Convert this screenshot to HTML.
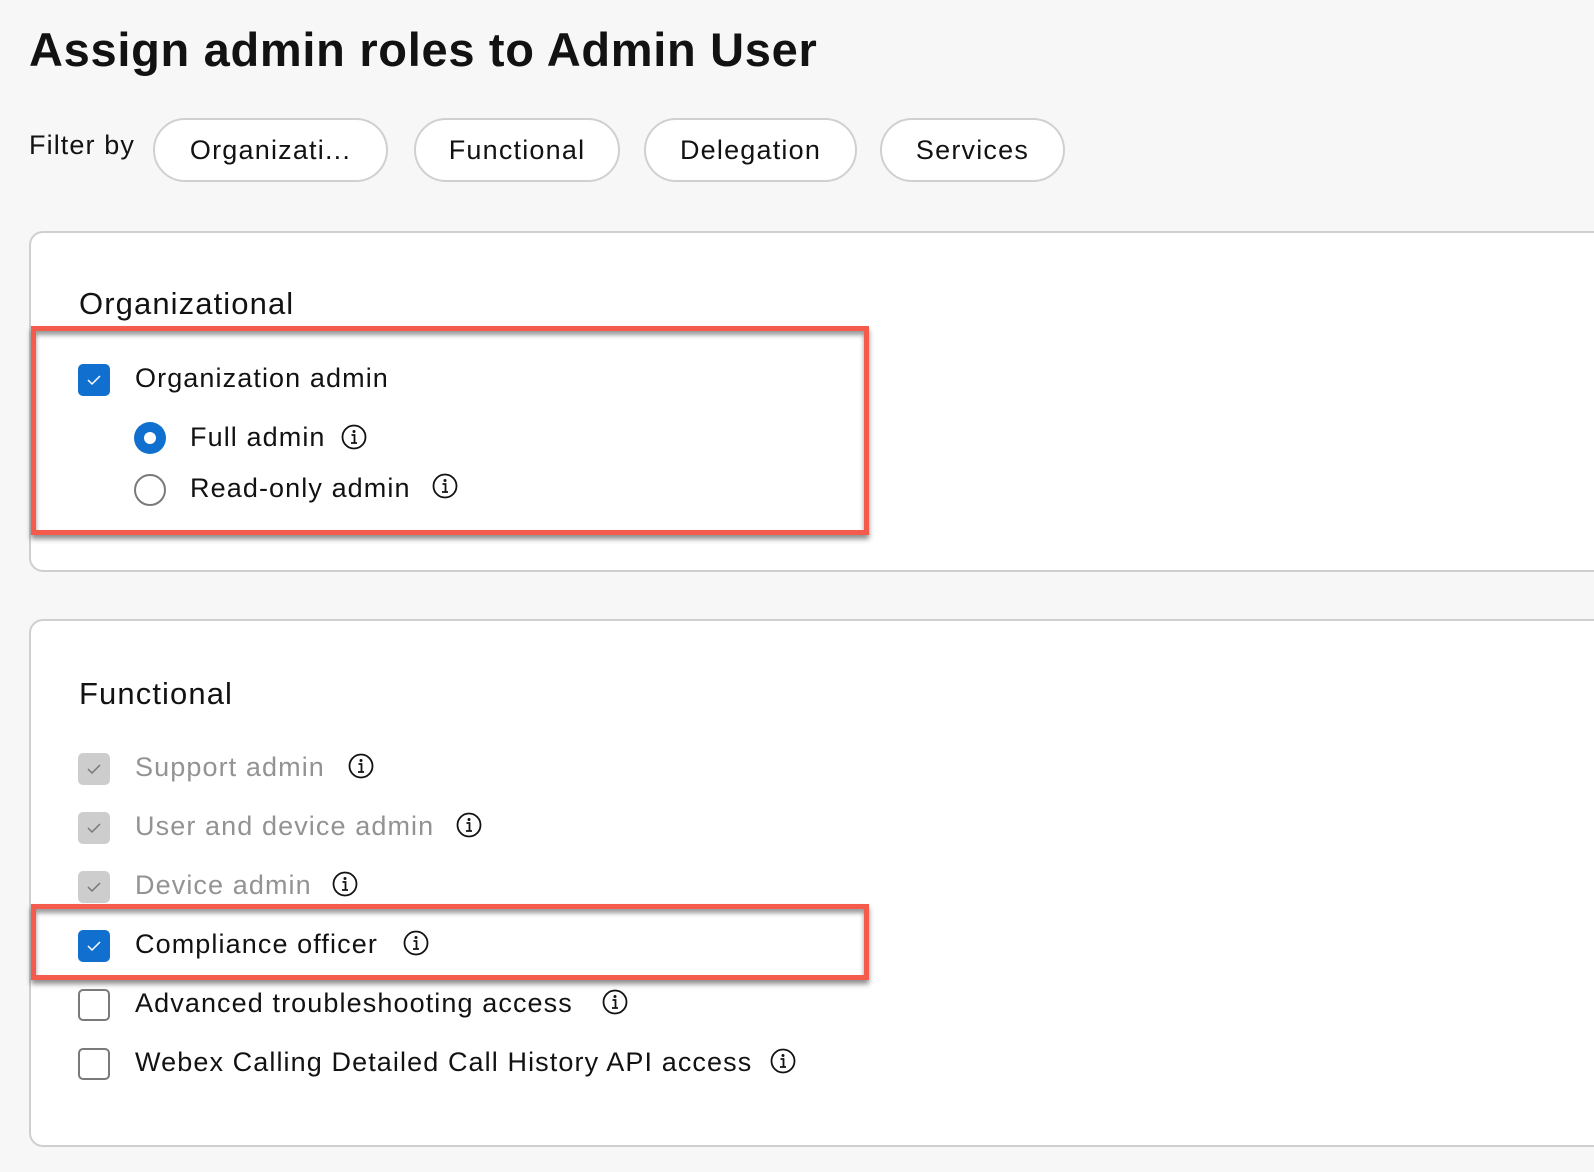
<!DOCTYPE html>
<html><head><meta charset="utf-8"><style>
body{margin:0;width:1594px;height:1172px;background:#f7f7f7;font-family:"Liberation Sans",sans-serif;color:#121212;position:relative;overflow:hidden}
.a{position:absolute;white-space:nowrap}
h1{position:absolute;left:29px;top:22px;margin:0;font-size:47px;font-weight:bold;letter-spacing:0.7px}
.pill{position:absolute;top:118px;height:60px;border:2px solid #d0d0d0;border-radius:32px;background:#fff;font-size:27px;letter-spacing:1.2px;display:flex;align-items:center;justify-content:center;box-sizing:content-box}
.card{position:absolute;left:29px;width:1600px;background:#fff;border:2px solid #cfcfcf;border-radius:14px}
.h2{font-size:31px;letter-spacing:1.1px}
.t{font-size:27px;line-height:32px;letter-spacing:1.1px}
.g{color:#939393}
.cb{position:absolute;width:32px;height:32px;border-radius:5px;box-sizing:border-box}
.cb.on{background:#1170cf}
.cb.dis{background:#cdcdcd}
.cb.off{border:2px solid #7a7a7a;background:#fff}
.cb svg{position:absolute;left:8px;top:9px}
.info{position:absolute;width:26px;height:26px}
.red{position:absolute;border:5px solid #f45b4d;box-shadow:0 4px 5px rgba(0,0,0,.45),inset 0 4px 5px rgba(0,0,0,.4)}
</style></head><body>
<h1>Assign admin roles to Admin User</h1>
<div class="a" style="left:29px;top:130px;font-size:27px;letter-spacing:1.1px">Filter by</div>
<div class="pill" style="left:153px;width:231px">Organizati...</div>
<div class="pill" style="left:414px;width:202px">Functional</div>
<div class="pill" style="left:644px;width:209px">Delegation</div>
<div class="pill" style="left:880px;width:181px">Services</div>

<div class="card" style="top:231px;height:337px"></div>
<div class="a h2" style="left:79px;top:286px">Organizational</div>
<div class="red" style="left:31px;top:326px;width:828px;height:199px"></div>
<div class="cb on" style="left:78px;top:364px"><svg width="16" height="14" viewBox="0 0 16 14"><path d="M2 7l4 4 8-8" fill="none" stroke="#fff" stroke-width="1.5"/></svg></div>
<div class="a t" style="left:135px;top:362px">Organization admin</div>
<div class="a" style="left:134px;top:422px;width:32px;height:32px;border-radius:50%;background:#1170cf"><div style="position:absolute;left:10px;top:10px;width:12px;height:12px;border-radius:50%;background:#fff"></div></div>
<div class="a t" style="left:190px;top:421px">Full admin</div>
<svg class="info" style="left:341px;top:424px" viewBox="0 0 26 26"><circle cx="13" cy="13" r="11.5" fill="none" stroke="#121212" stroke-width="1.8"/><circle cx="13" cy="7.5" r="1.5" fill="#121212"/><path d="M10.5 11h3v8M10 19h6" fill="none" stroke="#121212" stroke-width="1.8"/></svg>
<div class="a" style="left:134px;top:474px;width:32px;height:32px;border-radius:50%;border:2px solid #7a7a7a;box-sizing:border-box;background:#fff"></div>
<div class="a t" style="left:190px;top:472px">Read-only admin</div>
<svg class="info" style="left:432px;top:473px" viewBox="0 0 26 26"><circle cx="13" cy="13" r="11.5" fill="none" stroke="#121212" stroke-width="1.8"/><circle cx="13" cy="7.5" r="1.5" fill="#121212"/><path d="M10.5 11h3v8M10 19h6" fill="none" stroke="#121212" stroke-width="1.8"/></svg>

<div class="card" style="top:619px;height:524px"></div>
<div class="a h2" style="left:79px;top:676px">Functional</div>

<div class="cb dis" style="left:78px;top:753px"><svg width="16" height="14" viewBox="0 0 16 14"><path d="M2 7l4 4 8-8" fill="none" stroke="#777" stroke-width="1.5"/></svg></div>
<div class="a t g" style="left:135px;top:751px">Support admin</div>
<svg class="info" style="left:348px;top:753px" viewBox="0 0 26 26"><circle cx="13" cy="13" r="11.5" fill="none" stroke="#121212" stroke-width="1.8"/><circle cx="13" cy="7.5" r="1.5" fill="#121212"/><path d="M10.5 11h3v8M10 19h6" fill="none" stroke="#121212" stroke-width="1.8"/></svg>

<div class="cb dis" style="left:78px;top:812px"><svg width="16" height="14" viewBox="0 0 16 14"><path d="M2 7l4 4 8-8" fill="none" stroke="#777" stroke-width="1.5"/></svg></div>
<div class="a t g" style="left:135px;top:810px">User and device admin</div>
<svg class="info" style="left:456px;top:812px" viewBox="0 0 26 26"><circle cx="13" cy="13" r="11.5" fill="none" stroke="#121212" stroke-width="1.8"/><circle cx="13" cy="7.5" r="1.5" fill="#121212"/><path d="M10.5 11h3v8M10 19h6" fill="none" stroke="#121212" stroke-width="1.8"/></svg>

<div class="cb dis" style="left:78px;top:871px"><svg width="16" height="14" viewBox="0 0 16 14"><path d="M2 7l4 4 8-8" fill="none" stroke="#777" stroke-width="1.5"/></svg></div>
<div class="a t g" style="left:135px;top:869px">Device admin</div>
<svg class="info" style="left:332px;top:871px" viewBox="0 0 26 26"><circle cx="13" cy="13" r="11.5" fill="none" stroke="#121212" stroke-width="1.8"/><circle cx="13" cy="7.5" r="1.5" fill="#121212"/><path d="M10.5 11h3v8M10 19h6" fill="none" stroke="#121212" stroke-width="1.8"/></svg>

<div class="red" style="left:31px;top:904px;width:828px;height:66px"></div>
<div class="cb on" style="left:78px;top:930px"><svg width="16" height="14" viewBox="0 0 16 14"><path d="M2 7l4 4 8-8" fill="none" stroke="#fff" stroke-width="1.5"/></svg></div>
<div class="a t" style="left:135px;top:928px">Compliance officer</div>
<svg class="info" style="left:403px;top:930px" viewBox="0 0 26 26"><circle cx="13" cy="13" r="11.5" fill="none" stroke="#121212" stroke-width="1.8"/><circle cx="13" cy="7.5" r="1.5" fill="#121212"/><path d="M10.5 11h3v8M10 19h6" fill="none" stroke="#121212" stroke-width="1.8"/></svg>

<div class="cb off" style="left:78px;top:989px"></div>
<div class="a t" style="left:135px;top:987px">Advanced troubleshooting access</div>
<svg class="info" style="left:602px;top:989px" viewBox="0 0 26 26"><circle cx="13" cy="13" r="11.5" fill="none" stroke="#121212" stroke-width="1.8"/><circle cx="13" cy="7.5" r="1.5" fill="#121212"/><path d="M10.5 11h3v8M10 19h6" fill="none" stroke="#121212" stroke-width="1.8"/></svg>

<div class="cb off" style="left:78px;top:1048px"></div>
<div class="a t" style="left:135px;top:1046px">Webex Calling Detailed Call History API access</div>
<svg class="info" style="left:770px;top:1048px" viewBox="0 0 26 26"><circle cx="13" cy="13" r="11.5" fill="none" stroke="#121212" stroke-width="1.8"/><circle cx="13" cy="7.5" r="1.5" fill="#121212"/><path d="M10.5 11h3v8M10 19h6" fill="none" stroke="#121212" stroke-width="1.8"/></svg>
</body></html>
